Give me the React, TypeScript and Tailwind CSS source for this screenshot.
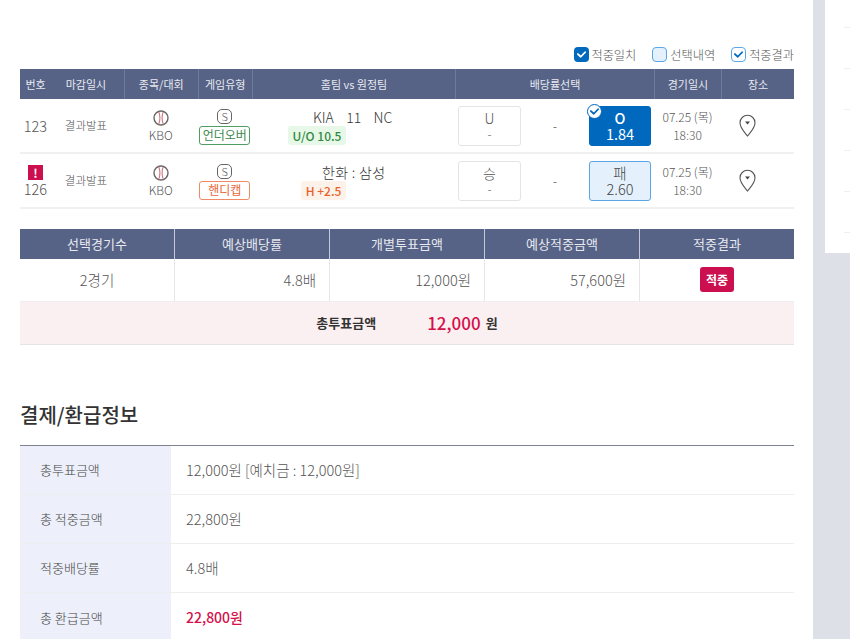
import React from "react";

const gridCols = "grid grid-cols-[104px_73.5px_54.5px_203px_199px_67px_73px]";
const font = "font-['Noto_Sans_CJK_KR','Noto_Sans',sans-serif]";

const Baseball = () => (
  <svg width="16" height="16" viewBox="0 0 16 16" fill="none">
    <circle cx="8" cy="8" r="7" stroke="#666" strokeWidth="1.4" />
    <path d="M5.7 1.6C7.2 5.5 7.2 10.5 5.7 14.4" stroke="#c9757d" strokeWidth="1.1" />
    <path d="M10.3 1.6C8.8 5.5 8.8 10.5 10.3 14.4" stroke="#c9757d" strokeWidth="1.1" />
  </svg>
);

const Pin = () => (
  <svg width="17" height="23" viewBox="0 0 17 23" fill="none">
    <path d="M8.5 22C5.8 18.4 1 14.2 1 8.8a7.5 7.5 0 0 1 15 0C16 14.2 11.2 18.4 8.5 22Z" stroke="#555" strokeWidth="1.1" />
    <path d="M6 7.6h5L8.5 10.6Z" fill="#444" />
  </svg>
);

const Check = ({ color }: { color: string }) => (
  <svg width="11" height="9" viewBox="0 0 12 10" fill="none">
    <path d="M2 4.5 5.2 7.5 10 2.5" stroke={color} strokeWidth="2" strokeLinecap="round" strokeLinejoin="round" />
  </svg>
);

const Legend = () => (
  <div className="flex justify-end items-end h-[69px] pb-[5px] text-[12.2px] text-[#555]">
    <span className="flex items-center gap-[2px]">
      <span className="w-[15px] h-[15px] rounded-[4px] bg-[#0069bd] flex items-center justify-center">
        <Check color="#fff" />
      </span>
      적중일치
    </span>
    <span className="flex items-center gap-[3px] ml-[16px]">
      <span className="w-[15px] h-[15px] rounded-[4px] bg-[#e4f1fc] border border-[#5ba6e6]" />
      선택내역
    </span>
    <span className="flex items-center gap-[3px] ml-[16px]">
      <span className="w-[15px] h-[15px] rounded-[4px] bg-white border border-[#5ba6e6] flex items-center justify-center">
        <Check color="#0069bd" />
      </span>
      적중결과
    </span>
  </div>
);

type Game = {
  no: string;
  alert?: boolean;
  typeLabel: string;
  typeClass: string;
  teams: React.ReactNode;
  teamsClass: string;
  tag: string;
  tagClass: string;
  left: string;
  right: string;
  rate: string;
  picked: boolean;
};

const games: Game[] = [
  {
    no: "123",
    typeLabel: "언더오버",
    typeClass: "border-[#4f9d63] text-[#3c8a50]",
    teams: <span className="whitespace-pre">KIA    11    NC</span>,
    teamsClass: "pl-[61px]",
    tag: "U/O 10.5",
    tagClass: "ml-[36px] w-[58px] bg-[#e8f8e8] text-[#2f8a3f]",
    left: "U",
    right: "O",
    rate: "1.84",
    picked: true,
  },
  {
    no: "126",
    alert: true,
    typeLabel: "핸디캡",
    typeClass: "border-[#ee8a66] text-[#e8683a]",
    teams: <span className="whitespace-pre tracking-[0.3px]">한화 : 삼성</span>,
    teamsClass: "pl-[70px]",
    tag: "H +2.5",
    tagClass: "ml-[49px] w-[45px] bg-[#fdf2e9] text-[#e8632b]",
    left: "승",
    right: "패",
    rate: "2.60",
    picked: false,
  },
];

const GameRow = ({ g }: { g: Game }) => (
  <div className={`${gridCols} h-[55px] border-b-2 border-[#f0f0f0] items-center text-[#555]`}>
    <div className="flex items-center">
      <div className="w-[31px] flex flex-col items-center text-[14.5px] leading-[18px] pt-[1px]">
        {g.alert && (
          <span className="w-[15px] h-[15px] mt-[1px] bg-[#cc0f4f] text-white text-[12px] font-bold leading-[15px] text-center">!</span>
        )}
        <span>{g.no}</span>
      </div>
      <div className="flex-1 text-center text-[11.5px] pr-[3px]">결과발표</div>
    </div>
    <div className="flex flex-col items-center text-[12px] leading-[16px]">
      <Baseball />
      <span className="mt-[1px] mb-[-1px]">KBO</span>
    </div>
    <div className="flex flex-col items-center pt-[2px]">
      <span className="w-[15px] h-[15px] rounded-[5px] border border-[#666] text-[11px] leading-[13px] text-center text-[#555]">S</span>
      <span className={`mt-[2px] w-[51px] h-[19px] rounded-[3px] border text-[12px] font-normal leading-[16px] text-center ${g.typeClass}`}>
        {g.typeLabel}
      </span>
    </div>
    <div className="flex flex-col">
      <div className={`text-[14px] leading-[20px] text-[#333] ${g.teamsClass}`}>{g.teams}</div>
      <div className={`mt-[-1px] h-[19px] rounded-[3px] text-[12px] font-medium leading-[19px] text-center ${g.tagClass}`}>{g.tag}</div>
    </div>
    <div className="flex items-center pl-[3px]">
      <div className="w-[63px] h-[40px] rounded-[3px] border border-[#e4e4e4] flex flex-col items-center justify-center leading-[15px]">
        <span className="text-[14px]">{g.left}</span>
        <span className="text-[12px]">-</span>
      </div>
      <div className="w-[68px] text-center text-[13px]">-</div>
      <div
        className={`relative w-[62px] h-[40px] rounded-[3px] border flex flex-col items-center justify-center leading-[16px] text-[14.5px] ${
          g.picked ? "bg-[#0069bd] border-[#0069bd] text-white font-normal" : "bg-[#e4f1fc] border-[#5ba6e6] text-[#444]"
        }`}
      >
        {g.picked && (
          <span className="absolute left-[-3px] top-[-3px] w-[15px] h-[15px] rounded-full bg-white border border-[#0069bd] flex items-center justify-center">
            <Check color="#0069bd" />
          </span>
        )}
        <span className={g.picked ? "font-medium" : ""}>{g.right}</span>
        <span>{g.rate}</span>
      </div>
    </div>
    <div className="text-center text-[12px] leading-[18px]">
      07.25 (목)
      <br />
      18:30
    </div>
    <div className="flex justify-center pr-[20px]">
      <Pin />
    </div>
  </div>
);

const headerCell = "flex items-center justify-center border-l border-[#6f7a9c]";

const GameTable = () => (
  <div>
    <div className={`${gridCols} h-[30px] bg-[#566286] text-[#e8eaf0] text-[11px] font-normal`}>
      <div className="flex items-center">
        <span className="w-[31px] text-center">번호</span>
        <span className="flex-1 text-center pr-[3px]">마감일시</span>
      </div>
      <div className={headerCell}>종목/대회</div>
      <div className={headerCell}>게임유형</div>
      <div className={headerCell}>홈팀 vs 원정팀</div>
      <div className={headerCell}>배당률선택</div>
      <div className={headerCell}>경기일시</div>
      <div className={headerCell}>장소</div>
    </div>
    {games.map((g) => (
      <GameRow key={g.no} g={g} />
    ))}
  </div>
);

const summaryCols = "grid grid-cols-[154px_155px_155px_155px_155px]";

const Summary = () => (
  <div className="mt-[20px]">
    <div className={`${summaryCols} h-[30px] bg-[#566286] text-[#e8eaf0] text-[13px] font-normal`}>
      {["선택경기수", "예상배당률", "개별투표금액", "예상적중금액", "적중결과"].map((t) => (
        <div key={t} className="flex items-center justify-center border-l border-[#c4c9d8] first:border-l-0">
          {t}
        </div>
      ))}
    </div>
    <div className={`${summaryCols} h-[43px] text-[14.5px] text-[#555] border-b border-[#eeeeee]`}>
      <div className="flex items-center justify-center">2경기</div>
      <div className="flex items-center justify-end pr-[13px] border-l border-[#e6e6e6]">4.8배</div>
      <div className="flex items-center justify-end pr-[13px] border-l border-[#e6e6e6]">12,000원</div>
      <div className="flex items-center justify-end pr-[13px] border-l border-[#e6e6e6]">57,600원</div>
      <div className="flex items-center justify-center border-l border-[#e6e6e6] pb-[1px]">
        <span className="w-[34px] h-[25px] rounded-[3px] bg-[#cc0f4f] text-white text-[12px] font-bold leading-[25px] text-center">적중</span>
      </div>
    </div>
    <div className="h-[43px] bg-[#fbf0f1] border-b border-[#e8e4e4] flex items-center justify-center">
      <span className="text-[13px] font-bold text-[#333]">총투표금액</span>
      <span className="ml-[51px] text-[17px] font-medium text-[#d40f4b]">12,000</span>
      <span className="ml-[5px] text-[13px] font-bold text-[#333]">원</span>
    </div>
  </div>
);

const payRows: { label: string; value: string; strong?: boolean }[] = [
  { label: "총투표금액", value: "12,000원 [예치금 : 12,000원]" },
  { label: "총 적중금액", value: "22,800원" },
  { label: "적중배당률", value: "4.8배" },
  { label: "총 환급금액", value: "22,800원", strong: true },
];

const PayInfo = () => (
  <div>
    <h2 className="mt-[47px] h-[53px] text-[20px] leading-[46px] font-medium text-[#333]">결제/환급정보</h2>
    <div className="border-t border-[#7d8391]">
      {payRows.map((r) => (
        <div key={r.label} className="flex h-[49px] border-b border-[#eeeeee] last:border-b-0">
          <div className="w-[151px] bg-[#edf0fa] pl-[20px] flex items-center text-[13px] text-[#444]">{r.label}</div>
          <div className={`flex-1 pl-[15px] flex items-center ${r.strong ? "text-[14px] font-medium text-[#d40f4b]" : "text-[14.5px] text-[#555]"}`}>
            {r.value}
          </div>
        </div>
      ))}
    </div>
  </div>
);

const SidePanel = () => (
  <div className="w-[25px] h-[253px] bg-white ml-[12px] flex flex-col items-end pt-[27px] gap-[40px]">
    {[0, 1, 2, 3, 4, 5].map((i) => (
      <div key={i} className="w-[6px] h-px bg-[#efefef]" />
    ))}
  </div>
);

export default function App() {
  return (
    <div className={`flex h-[639px] w-[850px] overflow-hidden bg-[#dde0e6] font-light ${font}`}>
      <main className="w-[813px] bg-white px-[20px] shrink-0">
        <div className="w-[774px]">
          <Legend />
          <GameTable />
          <Summary />
          <PayInfo />
        </div>
      </main>
      <SidePanel />
    </div>
  );
}
